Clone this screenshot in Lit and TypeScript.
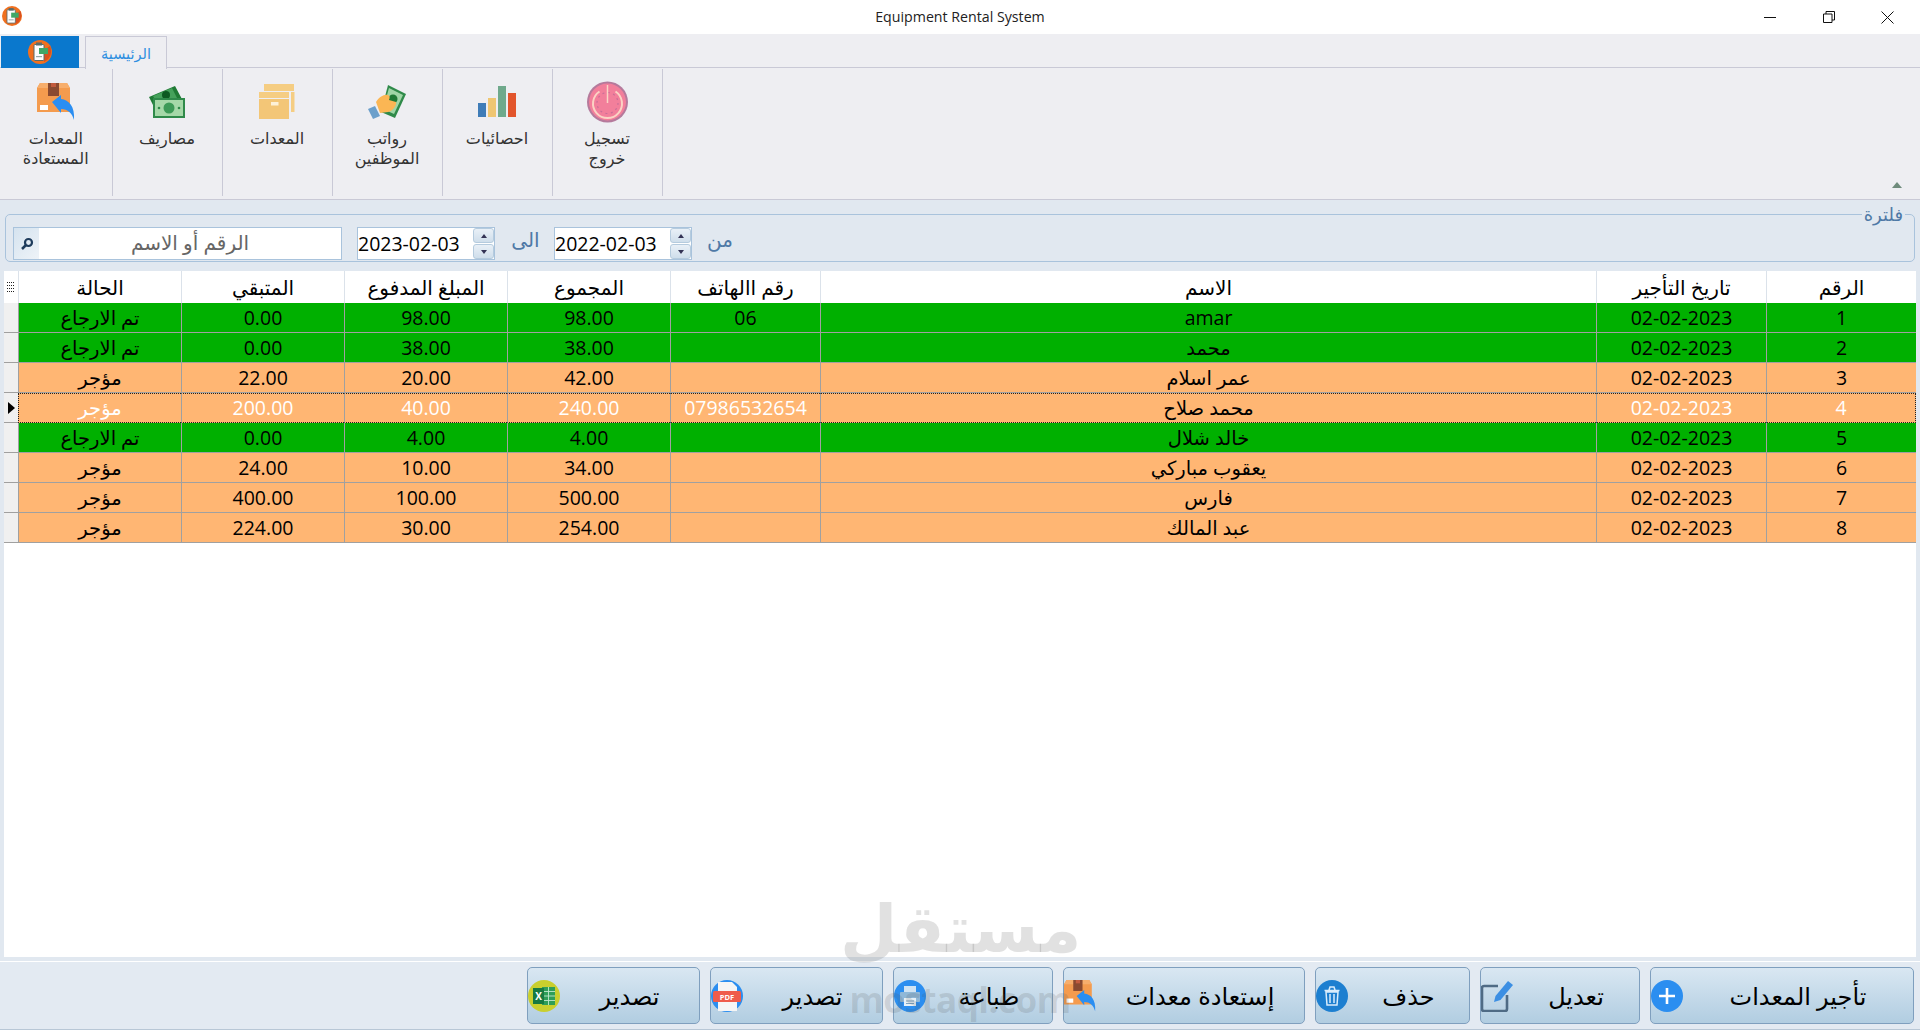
import { LitElement, html, css, svg } from "lit";
import { customElement } from "lit/decorators.js";

const box = (w: number, h: number) => svg`
<svg width=${w} height=${h} viewBox="0 0 38 38">
  <path d="M0 5l3-5h27l3 5v24H0z" fill="#f49b4e"/>
  <path d="M0 5l3-5h27l3 5z" fill="#f7ae6c"/>
  <rect x="11" y="0" width="11" height="13" fill="#8a4a30"/>
  <rect x="14" y="0" width="5" height="4" fill="#c25b3d"/>
  <rect x="3" y="22" width="8" height="5" fill="#fff"/>
  <path d="M15 18l9-7v4c8 1 14 7 13 21-2-7-6-11-13-11v4z" fill="#2a8ef2" transform="translate(0 1)"/>
</svg>`;

const cash = svg`
<svg width="36" height="32" viewBox="0 0 36 32">
  <path d="M0 11L26 0l8 15-30 4z" fill="#1f7a35"/>
  <path d="M4 10l19-8 5 10-20 5z" fill="#45a15b"/>
  <circle cx="17" cy="9" r="4" fill="#0d5a22"/>
  <rect x="4" y="12" width="32" height="20" fill="#2f8a4a"/>
  <rect x="6" y="14" width="28" height="16" fill="#a5d8a8"/>
  <circle cx="20" cy="22" r="5.5" fill="#3d9a57"/>
  <circle cx="10" cy="22" r="1.3" fill="#2f8a4a"/><circle cx="30" cy="22" r="1.3" fill="#2f8a4a"/>
</svg>`;

const folders = svg`
<svg width="36" height="35" viewBox="0 0 36 35">
  <rect x="5" y="0" width="30" height="7" fill="#f5cd83"/>
  <rect x="32" y="8" width="3.5" height="20" fill="#f5cd83"/>
  <rect x="0" y="8" width="30" height="6" fill="#f5cd83"/>
  <rect x="0" y="15" width="30" height="20" fill="#f3c677"/>
  <rect x="12" y="18" width="7.5" height="3.5" fill="#fdf1d8"/>
</svg>`;

const hand = svg`
<svg width="38" height="34" viewBox="0 0 38 34">
  <path d="M20 0l18 9-11 24-14-6z" fill="#2f8a4a"/>
  <path d="M21 3l14 7-9 19-11-5z" fill="#9fd6a6"/>
  <circle cx="25" cy="14" r="4.500" fill="#1f7a35"/>
  <path d="M8 17c3-5 8-8 12-7 3 1 1 5 1 5l7 2c1 3-3 9-8 10l-8 1z" fill="#fbb654"/>
  <path d="M0 24l7-3 5 10-7 3z" fill="#6b9fcb"/>
</svg>`;

const chart = svg`
<svg width="38" height="31" viewBox="0 0 38 31">
  <rect x="0" y="17" width="8" height="14" fill="#3f7cb8"/>
  <rect x="10" y="12" width="8" height="19" fill="#efc672"/>
  <rect x="20" y="0" width="8" height="31" fill="#6fa98c"/>
  <rect x="30" y="7" width="8" height="24" fill="#e2552c"/>
</svg>`;

const power = svg`
<svg width="41" height="42" viewBox="0 0 41 42">
  <circle cx="20.5" cy="21" r="20.5" fill="#b57a9c"/>
  <circle cx="20.5" cy="21" r="18.5" fill="#f27f9b"/>
  <path d="M12.5 10.5a14.5 14.5 0 1 0 16 0" fill="none" stroke="#fbd3c4" stroke-width="2"/>
  <circle cx="20.5" cy="22" r="10.500" fill="none" stroke="#c96f97" stroke-width="1.200" stroke-dasharray="2 3.500"/>
  <path d="M20.5 4v18" stroke="#fbd3c4" stroke-width="1.5"/>
</svg>`;

const appIcon = (s: number) => svg`
<svg width=${s} height=${s} viewBox="0 0 24 24">
  <circle cx="12" cy="12" r="12" fill="#f0701f"/>
  <path d="M16 22a12 12 0 0 0 6-16l-6 4z" fill="#d9501f"/>
  <rect x="6" y="4.5" width="10" height="16" rx="1" fill="#fdfdfd" stroke="#5b6b6b" stroke-width="1"/>
  <rect x="8" y="2.5" width="6" height="3" fill="#5b6b6b"/>
  <rect x="11" y="8" width="9" height="6" fill="#3fa768"/>
  <rect x="8" y="16" width="6" height="1.2" fill="#9aa"/>
</svg>`;

const plus = svg`<svg width="32" height="32" viewBox="0 0 32 32"><circle cx="16" cy="16" r="16" fill="#2b8ef0"/><path d="M16 8v16M8 16h16" stroke="#fff" stroke-width="2.6"/></svg>`;
const edit = svg`<svg width="32" height="32" viewBox="0 0 32 32"><path d="M17 6H3a2 2 0 0 0-2 2v21a2 2 0 0 0 2 2h21a2 2 0 0 0 2-2V15" fill="none" stroke="#4f6b85" stroke-width="2.6"/><path d="M13 22l1.500-6L27 1l5 4-12.500 15z" fill="#3c8fe3"/></svg>`;
const trash = svg`<svg width="32" height="32" viewBox="0 0 32 32"><circle cx="16" cy="16" r="16" fill="#1d7fd0"/><path d="M10 12h12l-1 13H11zM8.500 10.500h15M13 10l1-3h4l1 3M14 14v9M18 14v9" fill="none" stroke="#d8ecfb" stroke-width="1.500"/></svg>`;
const printer = svg`<svg width="32" height="32" viewBox="0 0 32 32"><circle cx="16" cy="16" r="16" fill="#2b8ef0"/><rect x="10" y="6" width="12" height="6" fill="#cfe3f3"/><rect x="6" y="12" width="20" height="10" rx="1" fill="#8fb8d8"/><rect x="10" y="18" width="12" height="8" fill="#e6f0f8"/><path d="M12 21h8M12 23.500h8" stroke="#7da4c4"/></svg>`;
const pdf = svg`<svg width="32" height="32" viewBox="0 0 32 32"><circle cx="16" cy="16" r="16" fill="#2b8ef0"/><path d="M7 2h14l5 5v24H7z" fill="#f5f5f5"/><rect x="2" y="11" width="28" height="11" rx="1.500" fill="#ef5c4c"/><text x="16" y="19.500" text-anchor="middle" font-size="7.500" font-weight="700" fill="#fff" font-family="Open Sans">PDF</text></svg>`;
const excel = svg`<svg width="32" height="32" viewBox="0 0 32 32"><circle cx="16" cy="16" r="16" fill="#c9cf2e"/><rect x="14" y="7" width="13" height="18" fill="#2f9e58"/><path d="M14 11.500h13M14 16h13M14 20.500h13M20.500 7v18" stroke="#bfe8cd" stroke-width=".9"/><rect x="5" y="8" width="11" height="16" fill="#177a42"/><text x="10.500" y="20" text-anchor="middle" font-size="10" font-weight="700" fill="#fff" font-family="Open Sans">X</text></svg>`;

const ribbonItems = [
  { icon: box(38, 38), lines: ["المعدات", "المستعادة"] },
  { icon: cash, lines: ["مصاريف"] },
  { icon: folders, lines: ["المعدات"] },
  { icon: hand, lines: ["رواتب", "الموظفين"] },
  { icon: chart, lines: ["احصائيات"] },
  { icon: power, lines: ["تسجيل", "خروج"] },
];

const heads = ["الرقم", "تاريخ التأجير", "الاسم", "رقم االهاتف", "المجموع", "المبلغ المدفوع", "المتبقي", "الحالة"];
const done = "تم الارجاع";
const rented = "مؤجر";
const rows: { c: string[]; k: string }[] = [
  { k: "g", c: ["1", "02-02-2023", "amar", "06", "98.00", "98.00", "0.00", done] },
  { k: "g", c: ["2", "02-02-2023", "محمد", "", "38.00", "38.00", "0.00", done] },
  { k: "o", c: ["3", "02-02-2023", "عمر اسلام", "", "42.00", "20.00", "22.00", rented] },
  { k: "s", c: ["4", "02-02-2023", "محمد صلاح", "07986532654", "240.00", "40.00", "200.00", rented] },
  { k: "g", c: ["5", "02-02-2023", "خالد شلال", "", "4.00", "4.00", "0.00", done] },
  { k: "o", c: ["6", "02-02-2023", "يعقوب مباركي", "", "34.00", "10.00", "24.00", rented] },
  { k: "o", c: ["7", "02-02-2023", "فارس", "", "500.00", "100.00", "400.00", rented] },
  { k: "o", c: ["8", "02-02-2023", "عبد المالك", "", "254.00", "30.00", "224.00", rented] },
];

const buttons = [
  { t: "تصدير", w: "w173", i: excel },
  { t: "تصدير", w: "w173", i: pdf },
  { t: "طباعة", w: "w160", i: printer },
  { t: "إستعادة معدات", w: "w242", i: box(32, 32) },
  { t: "حذف", w: "w155", i: trash },
  { t: "تعديل", w: "w160", i: edit },
  { t: "تأجير المعدات", w: "w264", i: plus },
];

@customElement("app-root")
export class AppRoot extends LitElement {
  static styles = css`
    :host { display: block; }
    * { box-sizing: border-box; }
    .win { width: 1920px; height: 1030px; display: flex; flex-direction: column; position: relative; overflow: hidden;
      background: #e1e8f0; font-family: "Open Sans", "DejaVu Sans", sans-serif; color: #000; }
    .title { height: 34px; flex: none; background: #fff; position: relative; display: flex; align-items: center; justify-content: center; font-size: 14.200px; color: #222; padding-bottom: 2px; }
    .title .logo { position: absolute; left: 2px; top: 6px; display: flex; }
    .ctl { position: absolute; top: 0; right: 0; display: flex; height: 34px; padding-right: 3px; }
    .ctl span { width: 59px; display: flex; align-items: center; justify-content: center; }
    .ribbon { flex: none; height: 166px; background: #eeeef2; display: flex; flex-direction: column; position: relative; }
    .tabs { height: 34px; padding: 2px 0 0 1px; display: flex; gap: 6px; border-bottom: 1px solid #c9c9d6; flex: none; }
    .appbtn { width: 78px; height: 32px; background: #0a78cd; display: flex; align-items: center; justify-content: center; }
    .tab { width: 82px; height: 33px; border: 1px solid #c9c9d6; border-bottom: 0; background: #eeeef2; color: #2f8fe0; font-size: 14.500px; display: flex; align-items: center; justify-content: center; }
    .panel { flex: 1; display: flex; padding-top: 1px; border-bottom: 1px solid #c9c9d6; margin-bottom: 0; }
    .group { width: 110px; height: 127px; border-right: 1px solid #c9c9d6; display: flex; flex-direction: column; align-items: center; margin-left: 0; }
    .group:first-child { width: 112.500px; }
    .gi { height: 56px; display: flex; align-items: center; justify-content: center; padding-top: 9px; flex: none; }
    .gt { font-size: 16px; line-height: 20px; color: #333; text-align: center; margin-top: 3px; }
    .collapse { position: absolute; right: 18px; bottom: 12px; width: 0; height: 0; border: 5px solid transparent; border-top: 0; border-bottom: 6px solid #6f8b7c; }
    .filter { flex: none; height: 48px; margin: 14px 5px 0 5px; border: 1px solid #a9c3dc; border-radius: 5px; position: relative; display: flex; padding: 12px 0 0 7px; align-items: flex-start; }
    .legend { position: absolute; right: 9px; top: -11px; padding: 0 2px; background: #e1e8f0; color: #4f79a6; font-size: 18px; line-height: 20px; }
    .field { height: 33px; background: #fff; border: 1px solid #a9c3dc; display: flex; }
    .search { width: 329px; margin-right: 15px; }
    .mag { width: 25px; flex: none; background: linear-gradient(135deg, #d5e3ef, #eef3f8); display: flex; align-items: center; justify-content: center; }
    .ph { flex: 1; text-align: center; font-size: 20px; line-height: 29px; color: #666; }
    .date { width: 138px; align-items: center; }
    .date:nth-of-type(n) { flex: none; }
    .date b { flex: 1; font-weight: 400; font-size: 19.500px; padding-left: 0; line-height: 31px; }
    .spin { width: 21px; height: 31px; display: flex; flex-direction: column; gap: 1px; flex: none; }
    .spin i { flex: 1; background: linear-gradient(#e9f0f7, #cfdeeb); border: 1px solid #b5cbde; border-radius: 3px; display: flex; align-items: center; justify-content: center; }
    .up { width: 0; height: 0; border: 3px solid transparent; border-top: 0; border-bottom: 4px solid #335; }
    .down { width: 0; height: 0; border: 3px solid transparent; border-bottom: 0; border-top: 4px solid #335; }
    .lbl { font-size: 20px; color: #4f79a6; line-height: 26px; }
    .l1 { margin: 0 14px 0 16px; width: 29px; text-align: center; white-space: nowrap; }
    .l2 { margin-left: 15px; width: 24px; text-align: center; white-space: nowrap; }
    .grid { flex: none; height: 686px; margin: 9px 4px 0 4px; background: #fff; }
    .row { display: grid; grid-template-columns: 150px 170px 776px 150px 163px 163px 163px 163px 14px; height: 30px; font-size: 19.500px; direction: rtl; }
    .row > div { display: flex; align-items: center; justify-content: center; border-left: 1px solid #a0a0a0; border-bottom: 1px solid #a0a0a0; line-height: 1; white-space: nowrap; }
    .row .rh { background: #f0f0f0; border-left: 0; border-bottom-color: #a0a0a0; }
    .row.head { height: 32px; background: #fff; }
    .row.head > div { border-left: 1px solid #dbe2ea; border-bottom: 0; font-size: 20px; padding-top: 2px; }
    .row.head .rh { background: #fff; border-left: 0; padding-top: 0; }
    .g > div:not(.rh) { background: #00b000; }
    .o > div:not(.rh), .s > div:not(.rh) { background: #ffb673; }
    .s > div:not(.rh) { color: #fff; border-top: 1px dotted #222; border-bottom: 1px dotted #222; }
    .s > div:first-child { border-right: 1px dotted #222; }
    .s > div:nth-child(8) { border-left: 1px dotted #222; }
    .s .dark { color: #000 !important; }
    .arrow { width: 0; height: 0; border: 6px solid transparent; border-right: 0; border-left: 7px solid #000; }
    .bar { flex: 1; margin-top: 4px; border-top: 1px solid #fff; border-bottom: 1px solid #b8c7d6; background: #e3eaf2; display: flex; justify-content: flex-end; gap: 10px; padding: 5px 6px 0 0; align-items: flex-start; }
    .btn { height: 57px; border: 1px solid #7f9fbe; border-radius: 5px; background: linear-gradient(#d9e7f2, #b1cde1); display: flex; align-items: center; font-size: 24px; color: #000; padding-left: 0; }
    .btn svg { display: block; flex: none; }
    .btn span { flex: 1; text-align: center; }
    .w173 { width: 173px; } .w160 { width: 160px; } .w242 { width: 242px; } .w155 { width: 155px; } .w264 { width: 264px; }
    .wm { position: absolute; left: 840px; top: 880px; width: 240px; text-align: center; color: rgba(80, 80, 80, .17); pointer-events: none; }
    .wm .a { font-size: 66px; font-weight: 700; line-height: 100px; height: 100px; font-family: "DejaVu Sans", sans-serif; }
    .wm .b { font-size: 35px; font-weight: 700; line-height: 40px; letter-spacing: -.5px; }
  `;

  render() {
    return html`<div class="win">
      <div class="title">
        <span class="logo">${appIcon(20)}</span>
        Equipment Rental System
        <div class="ctl">
          <span><svg width="12" height="12"><path d="M0 6.500h12" stroke="#111"/></svg></span>
          <span><svg width="12" height="12" fill="none" stroke="#111"><path d="M.5 3h8.500v8.500H.5zM3 3V.5h8.500V9H9"/></svg></span>
          <span><svg width="13" height="13" fill="none" stroke="#111"><path d="M.5.5l12 12M12.500.5l-12 12"/></svg></span>
        </div>
      </div>
      <div class="ribbon">
        <div class="tabs">
          <div class="appbtn">${appIcon(24)}</div>
          <div class="tab">الرئيسية</div>
        </div>
        <div class="panel">
          ${ribbonItems.map((r) => html`<div class="group">
            <div class="gi">${r.icon}</div>
            <div class="gt">${r.lines.map((l) => html`<div>${l}</div>`)}</div>
          </div>`)}
        </div>
        <div class="collapse"></div>
      </div>
      <div class="filter">
        <span class="legend">فلترة</span>
        <div class="field search">
          <div class="mag"><svg width="14" height="14" viewBox="0 0 14 14" fill="none" stroke="#1e3c5c" stroke-width="2.200"><circle cx="8.500" cy="5.500" r="3.500"/><path d="M6 8L2 12" stroke-width="2.500"/></svg></div>
          <div class="ph">الرقم أو الاسم</div>
        </div>
        <div class="field date"><b>2023-02-03</b><div class="spin"><i><span class="up"></span></i><i><span class="down"></span></i></div></div>
        <span class="lbl l1">الى</span>
        <div class="field date"><b>2022-02-03</b><div class="spin"><i><span class="up"></span></i><i><span class="down"></span></i></div></div>
        <span class="lbl l2">من</span>
      </div>
      <div class="grid">
        <div class="row head">
          ${heads.map((h) => html`<div>${h}</div>`)}
          <div class="rh"><svg width="8" height="13" fill="none" stroke="#222" stroke-dasharray="1 1"><path d="M0 1.500h8M0 4.500h8M0 7.500h8M0 10.500h8"/></svg></div>
        </div>
        ${rows.map((r) => html`<div class="row ${r.k}">
          ${r.c.map((v, i) => html`<div class="${i === 2 ? "dark" : ""}">${v}</div>`)}
          <div class="rh">${r.k === "s" ? html`<span class="arrow"></span>` : ""}</div>
        </div>`)}
      </div>
      <div class="bar">
        ${buttons.map((b) => html`<div class="btn ${b.w}">${b.i}<span>${b.t}</span></div>`)}
      </div>
      <div class="wm"><div class="a">مستقل</div><div class="b">mostaql.com</div></div>
    </div>`;
  }
}
